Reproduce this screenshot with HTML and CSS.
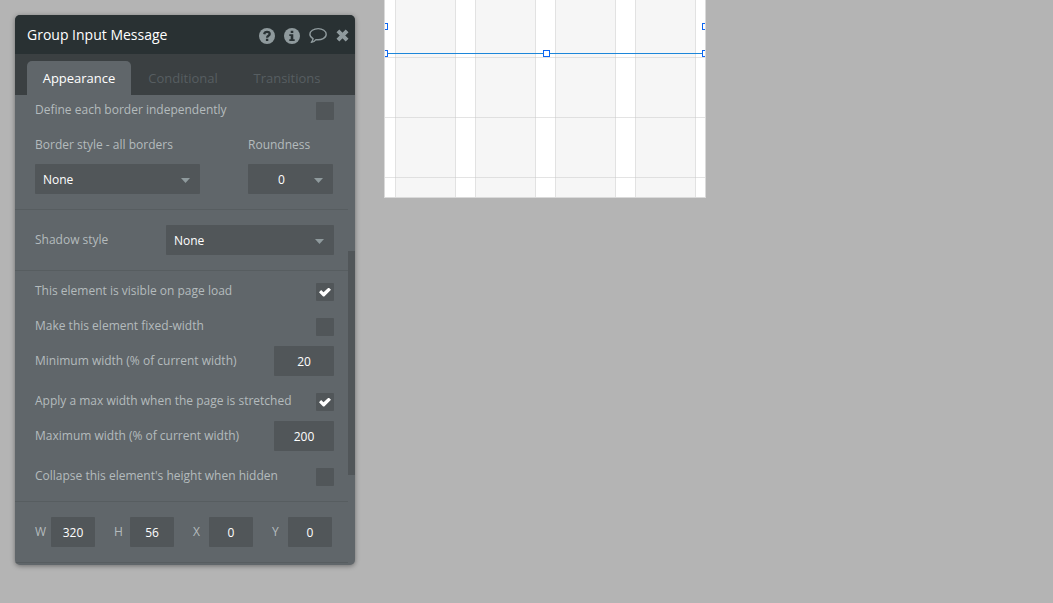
FILE: index.html
```html
<!DOCTYPE html>
<html lang="en">
<head>
<meta charset="utf-8">
<meta name="viewport" content="width=device-width, initial-scale=1">
<title>Group Input Message</title>
<link rel="stylesheet" href="styles.css">
</head>
<body>
<main class="workspace">
  <section class="panel" aria-labelledby="panel-title">
    <header class="panel-header">
      <h1 class="panel-title" id="panel-title">Group Input Message</h1>
      <div class="panel-actions">
        <button class="icon-button" type="button" aria-label="Help">
          <svg width="16" height="16" viewBox="0 0 16 16"><circle cx="8" cy="8" r="8" fill="currentColor"/><path d="M5.2 6.200C5.500 4.600 6.600 3.900 8 3.900s2.700.8 2.700 2.200c0 1.800-2.600 1.600-2.600 3.600" fill="none" stroke="#293133" stroke-width="2.300"/><path d="M6.900 10.700h2.400V13H6.900z" fill="#293133"/></svg>
        </button>
        <button class="icon-button" type="button" aria-label="Information">
          <svg width="16" height="16" viewBox="0 0 16 16"><circle cx="8" cy="8" r="8" fill="currentColor"/><path d="M6.700 2.700h2.600V5H6.700zM5.300 6.200h4v5h1.400V13H5.300v-1.800h1.400V8H5.300z" fill="#293133"/></svg>
        </button>
        <button class="icon-button" type="button" aria-label="Comments">
          <svg width="18" height="17" viewBox="0 0 18 17"><path d="M9.200 1.600C4.700 1.600.9 4.100.9 7.200c0 1.900 1.200 3.400 3.200 4.400-.2 1.500-.8 2.700-1.800 3.800 2-.3 3.400-1.100 4.600-2.800 5.700.8 10.300-1.600 10.300-5.400 0-3.100-3.700-5.600-8-5.600z" fill="none" stroke="currentColor" stroke-width="1.400" stroke-linejoin="round"/></svg>
        </button>
        <button class="icon-button" type="button" aria-label="Close">
          <svg width="13" height="13" viewBox="0 0 13 13"><path d="M1.900 1.900l9.200 9.200M11.100 1.900l-9.200 9.200" stroke="currentColor" stroke-width="4" fill="none"/></svg>
        </button>
      </div>
    </header>
    <nav class="tabs" role="tablist" aria-label="Property sections">
      <button class="tab tab-active" type="button" role="tab" aria-selected="true">Appearance</button>
      <button class="tab" type="button" role="tab" aria-selected="false">Conditional</button>
      <button class="tab" type="button" role="tab" aria-selected="false">Transitions</button>
    </nav>
    <div class="panel-body">
      <form class="properties">
        <div class="group group-first">
          <div class="row check-row">
            <label for="each-border">Define each border independently</label>
            <input class="check" type="checkbox" id="each-border">
          </div>
          <div class="field-pair">
            <div class="field field-wide">
              <label for="border-style">Border style - all borders</label>
              <span class="select-box"><select class="control" id="border-style"><option>None</option></select></span>
            </div>
            <div class="field field-narrow">
              <label for="roundness">Roundness</label>
              <span class="select-box"><select class="control select-centered" id="roundness"><option>0</option></select></span>
            </div>
          </div>
        </div>
        <div class="group">
          <div class="row">
            <label for="shadow-style">Shadow style</label>
            <span class="select-box shadow-box"><select class="control" id="shadow-style"><option>None</option></select></span>
          </div>
        </div>
        <div class="group group-layout">
          <div class="row check-row">
            <label for="visible">This element is visible on page load</label>
            <input class="check" type="checkbox" id="visible" checked>
          </div>
          <div class="row check-row">
            <label for="fixed-width">Make this element fixed-width</label>
            <input class="check" type="checkbox" id="fixed-width">
          </div>
          <div class="row number-row">
            <label for="min-width">Minimum width (% of current width)</label>
            <input class="control number" type="text" id="min-width" value="20">
          </div>
          <div class="row check-row">
            <label for="apply-max">Apply a max width when the page is stretched</label>
            <input class="check" type="checkbox" id="apply-max" checked>
          </div>
          <div class="row number-row">
            <label for="max-width">Maximum width (% of current width)</label>
            <input class="control number" type="text" id="max-width" value="200">
          </div>
          <div class="row check-row">
            <label for="collapse">Collapse this element's height when hidden</label>
            <input class="check" type="checkbox" id="collapse">
          </div>
        </div>
        <div class="group geometry">
          <div class="dimension"><label for="w">W</label><input class="control" type="text" id="w" value="320"></div>
          <div class="dimension"><label for="h">H</label><input class="control" type="text" id="h" value="56"></div>
          <div class="dimension"><label for="x">X</label><input class="control" type="text" id="x" value="0"></div>
          <div class="dimension"><label for="y">Y</label><input class="control" type="text" id="y" value="0"></div>
        </div>
      </form>
      <div class="scroll-track"><div class="scroll-thumb"></div></div>
    </div>
  </section>

  <section class="page-canvas" aria-label="Page canvas">
    <div class="column"></div>
    <div class="column"></div>
    <div class="column"></div>
    <div class="column"></div>
    <div class="grid-lines"></div>
    <div class="selection">
      <span class="handle middle-left"></span>
      <span class="handle middle-right"></span>
      <span class="handle bottom-left"></span>
      <span class="handle bottom-center"></span>
      <span class="handle bottom-right"></span>
    </div>
  </section>
</main>
</body>
</html>
```
FILE: styles.css
```css
* {
  box-sizing: border-box;
}

body {
  margin: 0;
  background: #b4b4b4;
  font-family: "Open Sans", sans-serif;
  font-size: 12px;
  line-height: 18px;
  color: #b4bbbd;
}

button,
input,
select {
  font: inherit;
  margin: 0;
  border: 0;
}

.workspace {
  display: flex;
  align-items: flex-start;
  gap: 29px;
  min-height: 100vh;
  padding-left: 15px;
}

/* Property panel */

.panel {
  flex: 0 0 340px;
  margin-top: 15px;
  border-radius: 5px;
  overflow: hidden;
  background: #60666a;
  box-shadow: 0 1px 5px rgba(0, 0, 0, 0.4);
}

.panel-header {
  display: flex;
  align-items: center;
  justify-content: space-between;
  height: 39px;
  padding: 0 6px 0 12px;
  background: #293133;
}

.panel-title {
  margin: 0;
  font-size: 14px;
  font-weight: 400;
  color: #fff;
}

.panel-actions {
  display: flex;
  align-items: center;
  gap: 9px;
  padding-top: 2px;
}

.icon-button {
  display: flex;
  padding: 0;
  background: none;
  color: #8f9a9d;
}

.tabs {
  display: flex;
  align-items: flex-end;
  height: 41px;
  padding: 0 12px;
  background: #3b4042;
}

.tab {
  width: 104px;
  height: 34px;
  padding: 0;
  border-radius: 5px 5px 0 0;
  background: none;
  font-size: 13px;
  color: #575e61;
}

.tab-active {
  background: #60666a;
  color: #fff;
}

.panel-body {
  display: flex;
}

.properties {
  flex: 1;
  padding-bottom: 2px;
}

.group {
  padding: 15px 14px 15px 20px;
  border-bottom: 1px solid #575d60;
}

.group-first {
  padding-top: 7px;
}

.group-layout {
  padding-top: 12px;
}

.row {
  display: flex;
  align-items: center;
  justify-content: space-between;
}

.check-row {
  height: 18px;
}

.check-row label {
  padding-bottom: 2px;
}

.row + .check-row {
  margin-top: 17px;
}

.number-row {
  margin-top: 10px;
}

.control {
  width: 100%;
  height: 30px;
  padding: 2px 8px 0;
  border-radius: 1px;
  background: #515659;
  color: #fff;
  appearance: none;
}

input.control {
  padding: 1px 0 0;
  text-align: center;
}

input.number {
  width: 60px;
}

.check {
  display: grid;
  place-items: center;
  width: 18px;
  height: 18px;
  border-radius: 1px;
  background: #515659;
  appearance: none;
}

.check:checked::before {
  content: "";
  width: 12px;
  height: 9px;
  background: #fff;
  clip-path: polygon(0 52%, 18% 28%, 38% 52%, 80% 0, 100% 26%, 44% 100%, 34% 100%);
}

.field-pair {
  display: flex;
  justify-content: space-between;
  margin-top: 16px;
  padding-right: 1px;
}

.field {
  display: flex;
  flex-direction: column;
  gap: 10px;
}

.field-wide {
  width: 165px;
}

.field-narrow {
  width: 85px;
}

.select-box {
  position: relative;
  display: block;
}

.select-box::after {
  content: "";
  position: absolute;
  right: 10px;
  top: 14px;
  width: 9px;
  height: 5px;
  background: #8f9a9d;
  clip-path: polygon(0 0, 100% 0, 50% 100%);
  pointer-events: none;
}

.control.select-centered {
  padding-right: 26px;
  text-align: center;
  text-align-last: center;
}

.shadow-box {
  width: 168px;
}

.geometry {
  display: flex;
  gap: 19px;
}

.dimension {
  display: flex;
  align-items: center;
  width: 60px;
}

.dimension label {
  flex: 0 0 16px;
}

.dimension .control {
  flex: 1;
  min-width: 0;
}

.scroll-track {
  width: 7px;
  padding-top: 156px;
}

.scroll-thumb {
  height: 224px;
  background: #515659;
}

/* Page being edited */

.page-canvas {
  position: relative;
  flex: 0 0 322px;
  display: flex;
  justify-content: space-between;
  height: 198px;
  padding: 0 9px 0 10px;
  border: 1px solid #dadada;
  border-top: 0;
  background: #fff;
  overflow: hidden;
}

.column {
  width: 61px;
  background: #f6f6f6;
  border: 1px solid #e2e2e2;
  border-width: 0 1px;
}

.grid-lines {
  position: absolute;
  inset: -3px 0 0;
  background: linear-gradient(rgba(200, 200, 200, 0.5) 1px, transparent 1px) 0 0 / 100% 60px;
}

.selection {
  position: absolute;
  top: 0;
  left: 0;
  right: 0;
  height: 54px;
  border-bottom: 1px solid #1c86d9;
}

.handle {
  position: absolute;
  width: 7px;
  height: 7px;
  border: 1px solid #0d66f2;
  background: #fff;
}

.middle-left,
.bottom-left {
  left: -4px;
}

.middle-right,
.bottom-right {
  right: -4px;
}

.middle-left,
.middle-right {
  top: 23px;
}

.bottom-left,
.bottom-center,
.bottom-right {
  bottom: -4px;
}

.bottom-center {
  left: calc(50% - 2px);
}
```
